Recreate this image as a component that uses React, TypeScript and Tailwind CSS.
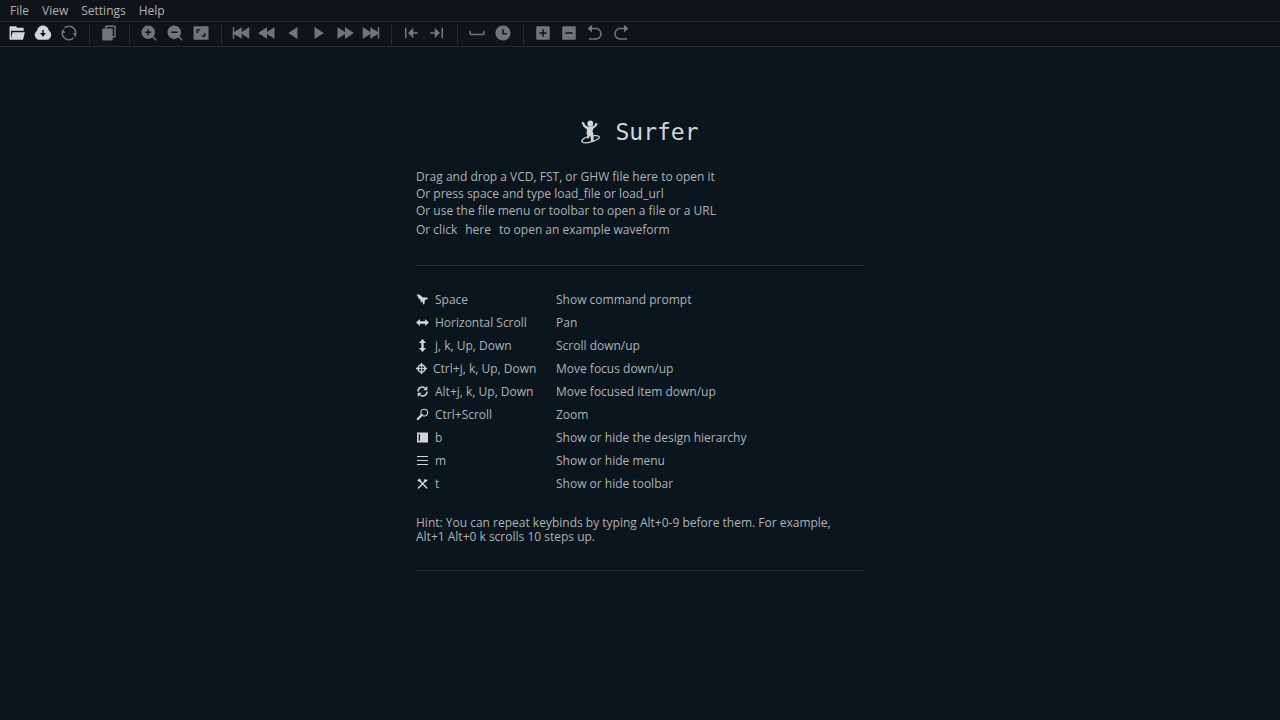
import type { ReactNode } from "react";
import {
  RiAddBoxFill,
  RiArrowGoBackFill,
  RiArrowGoForwardFill,
  RiAspectRatioFill,
  RiCheckboxIndeterminateFill,
  RiContractLeftFill,
  RiContractRightFill,
  RiDownloadCloudFill,
  RiFileCopyFill,
  RiFolderOpenFill,
  RiForwardEndFill,
  RiRefreshLine,
  RiRewindFill,
  RiRewindStartFill,
  RiSpace,
  RiSpeedFill,
  RiTimeFill,
  RiZoomInFill,
  RiZoomOutFill,
} from "react-icons/ri";

type IconProps = { className?: string };
type Tool = { label: string; icon: (props: IconProps) => ReactNode; enabled?: boolean };

function StepLeft({ className }: IconProps) {
  return (
    <svg viewBox="0 0 24 24" className={className} fill="currentColor" aria-hidden="true">
      <path d="M6.400 11.600 17.200 4.300Q18 3.900 18 4.800V19.200Q18 20.100 17.200 19.700L6.400 12.400Q6 12 6.400 11.600Z" />
    </svg>
  );
}

function StepRight({ className }: IconProps) {
  return (
    <svg viewBox="0 0 24 24" className={className} fill="currentColor" aria-hidden="true">
      <path d="M17.600 11.600 6.800 4.300Q6 3.900 6 4.800V19.200Q6 20.100 6.800 19.700L17.600 12.400Q18 12 17.600 11.600Z" />
    </svg>
  );
}

const menus = ["File", "View", "Settings", "Help"];

const toolGroups: Tool[][] = [
  [
    { label: "Open file", icon: RiFolderOpenFill, enabled: true },
    { label: "Open URL", icon: RiDownloadCloudFill, enabled: true },
    { label: "Reload", icon: RiRefreshLine },
  ],
  [{ label: "Copy variable value", icon: RiFileCopyFill }],
  [
    { label: "Zoom in", icon: RiZoomInFill },
    { label: "Zoom out", icon: RiZoomOutFill },
    { label: "Zoom to fit", icon: RiAspectRatioFill },
  ],
  [
    { label: "Go to start", icon: RiRewindStartFill },
    { label: "Go one page left", icon: RiRewindFill },
    { label: "Go left", icon: StepLeft },
    { label: "Go right", icon: StepRight },
    { label: "Go one page right", icon: RiSpeedFill },
    { label: "Go to end", icon: RiForwardEndFill },
  ],
  [
    { label: "Previous transition", icon: RiContractLeftFill },
    { label: "Next transition", icon: RiContractRightFill },
  ],
  [
    { label: "Add divider", icon: RiSpace },
    { label: "Add timeline", icon: RiTimeFill },
  ],
  [
    { label: "Add viewport", icon: RiAddBoxFill },
    { label: "Remove viewport", icon: RiCheckboxIndeterminateFill },
    { label: "Undo", icon: RiArrowGoBackFill },
    { label: "Redo", icon: RiArrowGoForwardFill },
  ],
];

function Glyph({ children, width = 13 }: { children: ReactNode; width?: number }) {
  return (
    <svg
      width={width}
      height={13}
      viewBox={`0 0 ${width} 13`}
      className="shrink-0 text-[#d4d4d4]"
      fill="currentColor"
      aria-hidden="true"
    >
      {children}
    </svg>
  );
}

const bindings: { keys: string; action: string; icon: ReactNode; iconWidth?: number }[] = [
  {
    keys: "Space",
    action: "Show command prompt",
    icon: (
      <path d="M.8 1.200C3 1.200 5.200 2.400 7 4.600L10.500 4.400 12.200 5.200 11.500 6.100 9 7 8.600 9.600 8.200 11.600 7.200 11.200 6.200 8.600 4.600 9.200 4.300 8.500 5 7.200C3 6 1.300 3.500.8 1.200Z" />
    ),
  },
  {
    keys: "Horizontal Scroll",
    action: "Pan",
    icon: <path d="M0 6.500 4 3v2.300h5V3l4 3.500L9 10V7.700H4V10Z" />,
  },
  {
    keys: "j, k, Up, Down",
    action: "Scroll down/up",
    icon: <path d="M6.500 0 10 4H7.700v5H10l-3.500 4L3 9h2.300V4H3Z" />,
  },
  {
    keys: "Ctrl+j, k, Up, Down",
    action: "Move focus down/up",
    iconWidth: 11,
    icon: (
      <>
        <circle cx="5.500" cy="6.500" r="3.600" fill="none" stroke="currentColor" strokeWidth="1.500" />
        <path d="M4.800 1h1.400v4H4.800zM4.800 8h1.400v4H4.800zM0 5.800h4v1.400H0zM7 5.800h4v1.400H7z" />
        <circle cx="5.500" cy="6.500" r="1.200" />
      </>
    ),
  },
  {
    keys: "Alt+j, k, Up, Down",
    action: "Move focused item down/up",
    icon: (
      <>
        <path
          d="M2 6.500A4.300 4.300 0 0 1 9 3M11 6.500A4.300 4.300 0 0 1 4 10"
          fill="none"
          stroke="currentColor"
          strokeWidth="1.500"
        />
        <path d="M11.300 1v4.200H7.200ZM1.700 12V7.800h4.100Z" />
      </>
    ),
  },
  {
    keys: "Ctrl+Scroll",
    action: "Zoom",
    icon: (
      <>
        <circle cx="8.200" cy="4.600" r="3.400" fill="none" stroke="currentColor" strokeWidth="1.100" />
        <path d="M5.800 7 1.800 11" stroke="currentColor" strokeWidth="2.200" strokeLinecap="round" />
      </>
    ),
  },
  {
    keys: "b",
    action: "Show or hide the design hierarchy",
    icon: <path fillRule="evenodd" d="M1 1.500h11v10H1ZM2.700 3.200v6.600H4V3.200Z" />,
  },
  {
    keys: "m",
    action: "Show or hide menu",
    icon: <path d="M1 2h11v1H1zM1 6h11v1H1zM1 10h11v1H1z" />,
  },
  {
    keys: "t",
    action: "Show or hide toolbar",
    icon: (
      <>
        <path d="M10.200 3.200 2.300 11" stroke="currentColor" strokeWidth="1.500" strokeLinecap="round" />
        <path d="M3.300 3.300 10.800 11" stroke="currentColor" strokeWidth="1.500" strokeLinecap="round" />
        <path d="M1.200 3.400 3.600 1.500 5.200 3.200 3.200 5ZM8.500 1.800 9.800 3l1.800-.2-.7 1.800-1.600.5L8 3.500Z" />
      </>
    ),
  },
];

function Surfer() {
  return (
    <svg viewBox="0 0 20 24" className="h-6 w-5 text-[#d4d4d4]" fill="currentColor" aria-hidden="true">
      <ellipse cx="9.300" cy="3.600" rx="2.900" ry="3.200" />
      <path d="M.6 2.300 2 2 3.600 3.100 3.700 4.700 6.300 6.600H11.300L13.800 4.900 14.300 3.300 16 3 16.600 4.100 15.300 6.200 12.300 8.800 11.500 11 12.300 13.500 12.900 18.400 12 19.800 13.500 20.300 13.200 20.900H9.900L9.700 17.200 8.500 15.800 8.200 18.200 6.500 18.500 5.900 17.700 6.300 15.200 5.500 13.200 5.900 9.500 2.300 6.400Z" />
      <path
        d="M6 17C2.500 18.200.3 20.200 1 21.600 1.700 23.100 6.200 23 10.900 21.600 15.500 20.300 18.700 18.300 18.200 16.800 17.800 15.600 15.300 15.400 12.500 15.700"
        fill="none"
        stroke="currentColor"
        strokeWidth="1.300"
      />
    </svg>
  );
}

export default function App() {
  return (
    <div className="flex min-h-screen flex-col bg-[#0a151d] font-['Open_Sans','Noto_Sans',sans-serif] text-[12px] text-[#b0b2b4]">
      <nav className="flex h-[22px] items-center gap-[13px] border-b border-[#272a2d] bg-[#0f1418] px-2.5">
        {menus.map((menu) => (
          <button key={menu} type="button" className="leading-4">
            {menu}
          </button>
        ))}
      </nav>

      <div role="toolbar" aria-label="Toolbar" className="flex h-[25px] gap-2 border-b border-[#272a2d] bg-[#0f1418] px-2">
        {toolGroups.map((group, index) => (
          <div key={group[0].label} className="flex gap-2">
            {index > 0 && (
              <div className="flex w-1.5 justify-center pt-0.5 pb-px">
                <div className="w-px bg-[#272a2d]" />
              </div>
            )}
            {group.map(({ label, icon: Icon, enabled }) => (
              <button
                key={label}
                type="button"
                aria-label={label}
                disabled={!enabled}
                className="flex h-[22px] items-center text-[#d4d4d4] disabled:text-[#727577]"
              >
                <Icon className="size-[18px]" />
              </button>
            ))}
          </div>
        ))}
      </div>

      <main className="mx-auto w-full max-w-[448px] pt-[71px]">
        <h1 className="flex items-center justify-center gap-3.5 font-['DejaVu_Sans_Mono',monospace] text-[23px] leading-7 text-[#d4d4d4]">
          <Surfer />
          Surfer
        </h1>

        <div className="pt-[22px] leading-[17px]">
          <p>Drag and drop a VCD, FST, or GHW file here to open it</p>
          <p>Or press space and type load_file or load_url</p>
          <p>Or use the file menu or toolbar to open a file or a URL</p>
          <p className="flex gap-2 leading-[21px]">
            Or click
            <button type="button">here</button>
            to open an example waveform
          </p>
        </div>

        <hr className="mt-[25px] border-[#272a2d]" />

        <table className="mt-[22px] w-full leading-[23px]">
          <tbody>
            {bindings.map(({ keys, action, icon, iconWidth }) => (
              <tr key={keys}>
                <th scope="row" className="w-[140px] p-0 text-left font-normal">
                  <span className="flex items-center gap-1.5">
                    <Glyph width={iconWidth}>{icon}</Glyph>
                    {keys}
                  </span>
                </th>
                <td className="p-0">{action}</td>
              </tr>
            ))}
          </tbody>
        </table>

        <p className="mt-[21px] pr-1 leading-[14px]">
          Hint: You can repeat keybinds by typing Alt+0-9 before them. For example, Alt+1 Alt+0 k scrolls 10 steps up.
        </p>

        <hr className="mt-[26px] border-[#272a2d]" />
      </main>
    </div>
  );
}
